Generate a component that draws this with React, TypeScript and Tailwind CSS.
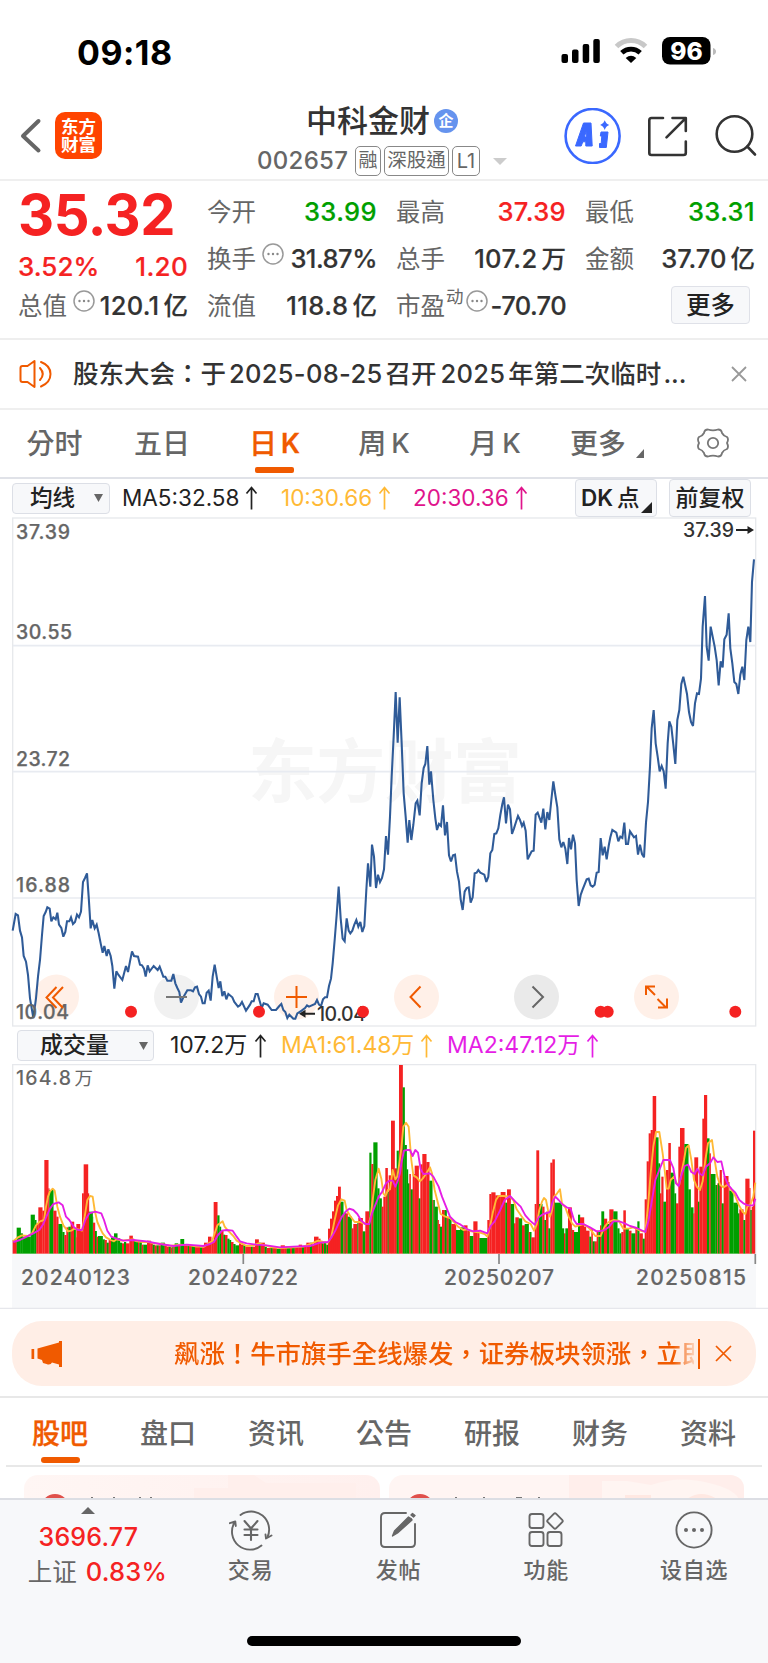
import type { ReactNode } from "react";

const PRICE_A =
  "38,1262 47,1212 54,1216 60,1262 66,1282 71,1338 78,1355 84,1395 90,1465 100,1524 108,1465 114,1400 120,1350 126,1275 131,1218 137,1206 142,1192 149,1196 154,1234 160,1222 167,1228 172,1208 177,1244 184,1254 190,1280 196,1266 201,1234 208,1234 213,1222 219,1242 225,1236 231,1214 237,1222 243,1205 249,1116 255,1104 261,1090 266,1160 272,1255 277,1230 284,1255 290,1244 296,1270 302,1300 308,1328 313,1308 320,1338 325,1318 332,1338 337,1368 343,1436 349,1384 355,1394 367,1410 378,1368 384,1386 390,1354 396,1324 402,1338 414,1340 420,1364 426,1366 432,1376 437,1400 443,1366 449,1384 461,1368 473,1380 479,1370 490,1400 496,1400 502,1412 514,1412 520,1392 526,1420 532,1434 538,1446 543,1478 550,1462 562,1441 573,1441 579,1444 585,1432 591,1430 597,1452 603,1460 608,1480 614,1480 620,1448 626,1442 632,1472 638,1400 644,1364 650,1400 656,1434 661,1414 667,1458 673,1444 679,1468 685,1452 697,1462 703,1476 714,1490 720,1486 726,1476 738,1502 750,1484 755,1474 761,1474 767,1452 773,1452 785,1494 791,1480 803,1484 815,1500 828,1500 838,1488 844,1482 850,1500 856,1506 862,1524 868,1514 880,1526 886,1526 892,1510 905,1502 915,1494 921,1486 927,1490 945,1482 951,1470 957,1484 963,1488 969,1468 975,1462 981,1462 987,1428 993,1406 998,1360 1004,1290 1010,1215 1016,1130 1022,1225 1028,1286 1034,1294 1040,1225 1046,1262 1051,1270 1057,1262 1063,1244 1069,1230 1075,1250 1081,1236 1087,1266 1093,1248 1099,1140 1104,1060 1111,1130 1116,1004 1122,1040 1128,1134 1134,1094 1140,1116 1146,1104 1152,1078 1158,978 1164,1034 1170,920 1175,800 1181,680 1187,546";
const PRICE_B =
  "77,546 83,698 89,562 95,700 101,850 107,920 113,998 118,930 124,990 130,945 137,880 142,872 149,916 155,820 161,774 166,762 172,708 178,824 183,784 190,870 196,925 201,960 207,942 213,948 219,886 225,976 231,936 237,1036 243,1054 249,1036 255,1034 261,1085 267,1115 272,1168 278,1200 284,1145 290,1134 296,1132 302,1178 308,1162 314,1090 320,1088 325,1080 331,1088 343,1094 349,1116 355,1100 361,1030 367,1020 373,972 379,970 385,955 391,915 397,882 402,862 408,940 414,884 420,898 426,972 432,955 438,936 444,918 450,930 456,948 461,938 467,962 473,1048 479,1036 485,1024 491,1022 497,914 503,908 514,938 520,896 526,958 532,906 538,930 544,870 550,814 556,855 562,892 568,988 574,1012 580,996 586,1016 592,1062 597,984 603,1018 609,974 615,1000 620,1110 626,1188 632,1155 638,1138 650,1108 656,1106 662,1126 668,1130 674,1124 680,1088 686,1086 692,984 698,1036 704,1010 710,1048 716,1008 721,982 727,960 739,968 745,994 751,980 757,984 763,938 768,1002 774,1002 780,964 792,982 798,978 804,1034 810,1004 816,1032 822,1042 828,938 834,876 840,770 845,655 851,600 857,700 863,740 869,784 875,768 881,784 887,836 893,700 898,634 904,650 910,704 916,762 922,630 928,600 934,522 940,500 946,528 951,552 957,606 963,636 969,648 975,580 981,550 987,552 993,506 998,350 1005,258 1010,410 1016,452 1022,350 1034,410 1040,450 1046,526 1052,454 1058,472 1063,388 1070,374 1076,310 1081,415 1087,460 1093,516 1099,522 1105,552 1111,494 1117,470 1123,510 1129,390 1135,350 1141,396 1146,216 1152,148";

const VOL_A =
  "38,660R 50,623G 62,640G 68,650G 92,584G 104,600G 109,610R 115,562R 127,572R 133,420R 145,505R 148,510G 160,572R 169,590R 175,612G 187,636G 193,645R 199,622R 205,620G 212,605R 222,628G 227,652R 229,612R 240,628R 246,520R 251,433R 264,520R 267,575G 278,590G 279,608R 285,633G 290,650R 294,648G 308,658G 314,660R 320,668G 326,660R 333,652G 342,640G 352,655G 360,668G 366,670R 372,666G 378,670R 388,647R 398,656R 402,662G 414,664R 418,664G 425,674R 430,674G 441,662R 452,668R 458,674G 464,676R 470,676G 476,676R 482,668G 494,674R 500,680R 506,680G 512,682R 517,680G 520,680R 524,670G 534,676R 541,657G 552,672R 563,676G 567,676R 575,678G 585,680R 600,682G 606,682R 612,668R 624,650R 634,662R 641,546R 652,586G 658,620G 663,630R 670,644G 675,645R 682,656G 688,660G 693,666R 700,672G 706,676G 717,670R 723,674R 730,676G 736,680R 753,680G 758,680R 765,658R 776,668G 782,668R 794,680G 800,684R 812,684G 818,684R 830,686G 842,676R 854,680R 860,680G 870,682R 876,680G 884,680R 896,674R 906,680G 912,680R 919,668R 930,668G 936,676R 942,650R 955,656R 961,668R 966,670G 969,670R 972,668G 978,674R 980,674G 984,626R 990,596R 996,574R 1002,542R 1008,528R 1014,500R 1022,545G 1030,580R 1034,575G 1037,580R 1043,590G 1055,625R 1060,612R 1072,605G 1075,594R 1088,634G 1096,574R 1108,398G 1114,432R 1120,367G 1132,505G 1138,535G 1145,560R 1150,530R 1156,444R 1163,515G 1166,466R 1173,302R 1184,445R 1190,392G 1195,392G";
const VOL_B =
  "87,135R 98,202G 104,375G 110,448G 114,490G 118,462R 122,508G 128,462R 134,437R 146,535G 151,433R 157,402R 169,426R 178,482G 187,540R 190,540G 194,560G 203,600R 206,612R 210,620G 216,570R 224,570G 230,590R 236,592G 244,612R 258,630G 270,622G 281,616R 292,632R 299,648G 310,604R 322,632R 328,654G 352,600R 358,522R 364,517R 376,526R 392,516R 406,548G 411,508R 422,552G 432,610R 436,592R 446,595G 456,616R 464,612G 476,636R 480,636G 484,652R 494,552R 499,391R 507,552G 517,560R 523,600G 528,575R 535,625G 541,428R 547,418R 554,548G 576,625G 582,640R 586,625G 594,562R 605,625G 606,630R 612,636G 624,584G 630,592R 642,620R 648,632R 658,650G 664,626R 668,664G 674,664R 680,632R 685,635G 690,616R 694,574G 702,596R 711,612G 718,568R 730,574G 742,625G 748,640G 754,636R 760,571R 767,625G 776,632R 784,640G 796,622R 802,604G 808,640R 818,656G 824,538R 830,424R 836,340R 842,330R 848,228R 858,352G 865,430G 870,520R 874,470R 880,545G 888,450R 895,369R 902,458G 913,520G 918,550R 925,380R 930,324R 943,372G 955,508G 962,562G 970,580R 973,412R 984,545G 988,440R 997,296R 1002,225R 1011,355G 1018,400R 1022,462G 1036,495G 1042,490R 1044,488G 1049,450R 1055,550G 1061,468R 1075,486R 1078,512G 1090,548G 1104,580G 1108,568R 1120,600G 1126,476R 1138,504R 1141,570G 1145,560R 1149,332R 1155,701R";

const MA1_A =
  "40,664 54,652 66,646 84,648 96,640 108,616 120,604 132,600 138,560 144,530 150,514 158,506 164,512 172,560 180,590 190,616 204,634 214,632 222,626 236,628 246,632 254,590 262,540 270,528 278,530 284,570 292,606 300,624 308,640 318,652 332,660 342,664 350,658 366,662 396,658 410,664 430,666 446,666 462,670 486,672 510,678 540,674 570,676 590,680 612,680 626,670 636,664 644,640 652,616 660,610 668,604 674,620 684,632 700,648 710,662 720,668 740,678 760,676 776,670 796,676 816,682 840,684 880,682 910,680 936,670 954,662 970,666 984,668 994,650 1004,600 1014,556 1024,538 1034,542 1040,570 1052,590 1064,606 1080,606 1094,612 1106,612 1112,590 1118,540 1126,480 1136,446 1144,476 1150,520 1156,528 1164,510 1170,508 1178,450 1186,478 1192,470 1198,430";
const MA1_B =
  "94,385 100,320 108,308 116,320 124,420 130,466 140,472 150,484 158,476 168,462 180,442 186,460 194,510 204,550 212,582 226,590 240,594 252,606 264,620 280,630 292,628 304,634 330,638 344,642 352,650 360,620 368,580 378,540 386,528 400,528 420,530 430,540 440,568 454,588 466,604 482,612 492,632 500,614 508,570 516,545 522,534 528,540 534,570 540,590 546,570 552,530 560,522 570,508 576,550 586,562 596,590 606,610 616,620 640,612 652,620 664,632 676,648 692,648 704,620 716,606 730,600 746,602 760,626 776,626 790,622 806,630 818,634 826,634 834,560 842,460 850,380 858,336 868,336 878,400 884,450 890,506 896,506 902,480 912,470 920,490 928,494 936,450 942,420 948,384 956,376 964,420 972,480 980,500 990,510 998,484 1006,420 1014,370 1026,360 1034,420 1042,470 1050,494 1060,502 1074,494 1084,510 1094,524 1106,554 1118,576 1126,582 1132,560 1142,552 1150,530 1156,488";
const MA2_A =
  "40,666 60,660 80,650 100,640 118,630 130,612 140,588 150,566 160,552 176,547 188,556 198,590 208,600 222,622 234,630 246,630 256,600 268,580 286,575 304,580 312,600 322,632 334,650 350,656 370,662 400,660 440,664 480,672 520,678 560,674 610,678 630,672 642,666 654,645 666,632 680,630 698,632 710,650 720,664 740,670 770,674 800,676 840,682 880,680 930,678 960,668 984,666 996,650 1006,632 1016,610 1026,590 1038,574 1048,566 1060,570 1072,582 1084,602 1096,612 1108,612 1116,580 1124,560 1136,530 1146,516 1158,490 1168,482 1178,482 1186,500 1194,480 1200,460";
const MA2_B =
  "94,430 102,392 112,390 120,390 128,408 136,390 144,398 152,448 160,462 180,460 190,470 206,500 216,530 228,560 240,590 256,606 272,614 292,628 310,634 330,632 352,640 362,618 374,604 390,572 404,540 420,528 436,545 452,560 466,586 480,602 494,614 506,592 520,582 540,576 548,545 556,530 566,540 576,552 590,562 602,566 612,600 620,612 640,612 660,622 680,634 700,632 716,622 730,604 748,604 764,610 780,618 800,624 826,636 836,600 846,540 856,480 868,450 880,420 900,420 910,444 918,490 926,498 936,460 944,438 954,434 964,456 974,462 982,446 990,462 998,466 1008,440 1020,430 1030,412 1042,426 1054,424 1064,470 1074,494 1086,508 1096,518 1108,540 1120,550 1134,556 1150,556 1156,536";

const SEAM = 1110;

function joinSeries(a: string, b: string) {
  const shifted = b
    .split(" ")
    .map((p) => {
      const [x, y] = p.split(",").map(Number);
      return `${x + SEAM},${y}`;
    })
    .join(" ");
  return `${a} ${shifted}`;
}

function parseBars(s: string, dx: number) {
  return s.split(" ").map((p) => {
    const [x, rest] = p.split(",");
    return { x: Number(x) + dx, top: parseInt(rest, 10), up: rest.endsWith("R") };
  });
}

const BARS = [...parseBars(VOL_A, 0), ...parseBars(VOL_B, SEAM)];

function Info() {
  return (
    <svg className="h-[22px] w-[22px] shrink-0" viewBox="0 0 22 22" fill="none" stroke="#999" strokeWidth="1.5">
      <circle cx="11" cy="11" r="10" />
      <g fill="#888" stroke="none">
        <circle cx="6.5" cy="11" r="1.2" />
        <circle cx="11" cy="11" r="1.2" />
        <circle cx="15.5" cy="11" r="1.2" />
      </g>
    </svg>
  );
}

function Up() {
  return (
    <svg className="h-6 w-[13px] shrink-0" viewBox="0 0 13 24" fill="none" stroke="currentColor" strokeWidth="1.7">
      <path d="M6.5 23.5V2M1.5 7.5L6.5 1.5L11.5 7.5" />
    </svg>
  );
}

function Cell({ label, extra, children, color }: { label: string; extra?: ReactNode; children: ReactNode; color: string }) {
  return (
    <div className="-ml-px flex h-[47px] items-center justify-between">
      <div className="flex shrink-0 items-center text-[24.500px] text-[#666]">
        <span>{label}</span>
        {extra}
      </div>
      <span className={`flex items-center whitespace-nowrap text-[25.500px] font-medium [-webkit-text-stroke:0.2px] ${color}`}>{children}</span>
    </div>
  );
}

function Unit({ children }: { children: ReactNode }) {
  return <span className="ml-[4px] text-[24.500px] tracking-normal">{children}</span>;
}

function StatusBar() {
  return (
    <div className="flex h-[102px] items-center justify-between pl-[77px] pr-[52px]">
      <span className="pt-[2px] text-[34px] font-bold tracking-[0.5px] text-black">09:18</span>
      <svg className="h-7 w-[155px]" viewBox="561 37 155 28">
        <rect x="561.5" y="54" width="6.5" height="9" rx="2" />
        <rect x="572" y="49.5" width="6.5" height="13.5" rx="2" />
        <rect x="582.7" y="44" width="6.5" height="19" rx="2" />
        <rect x="593.3" y="39" width="6.5" height="24" rx="2" />
        <path d="M616.5 46.5A20.500 20.500 0 0 1 645.500 46.500" fill="none" stroke="#c8c8c8" strokeWidth="5" />
        <path d="M621.8 52.7A13.500 13.500 0 0 1 640.200 52.700" fill="none" stroke="#000" strokeWidth="4.800" />
        <path d="M625.700 58Q631 53.300 636.300 58L631 63Z" />
        <rect x="662" y="37" width="48.500" height="27.500" rx="8" />
        <path d="M713 48Q716 49 716 51.500Q716 54 713 55Z" fill="#bbb" />
        <text x="686.500" y="59.600" textAnchor="middle" fill="#fff" fontSize="24.500" fontWeight="800">
          96
        </text>
      </svg>
    </div>
  );
}

function Header() {
  return (
    <div className="flex h-[79px] items-start border-b-2 border-[#efefef] pl-[20px]">
      <svg className="mt-[16px] h-[36px] w-[22px]" viewBox="0 0 22 36" fill="none" stroke="#666" strokeWidth="4" strokeLinecap="round" strokeLinejoin="round">
        <path d="M18.500 3L3 18L18.500 32.500" />
      </svg>
      <div className="ml-[13px] mt-[10px] flex h-[47px] w-[47px] flex-col items-center justify-center rounded-[10px] bg-[#ff4400] text-[17.5px] font-bold leading-[18px] text-white">
        <span>东方</span>
        <span>财富</span>
      </div>
      <div className="ml-[155px] flex w-[251px] flex-col">
        <div className="ml-[49px] flex h-[37px] items-center whitespace-nowrap">
          <span className="text-[31px] font-medium leading-[37px] text-[#333]">中科金财</span>
          <span className="ml-[4px] flex h-[24px] w-[24px] items-center justify-center rounded-full bg-[#6593ee] text-[15px] font-bold leading-none text-white">
            企
          </span>
        </div>
        <div className="mt-[7px] flex h-[30px] items-center text-[#666]">
          <span className="w-[98px] text-[24px] font-medium tracking-[0.3px]">002657</span>
          <span className="flex h-[30px] w-[26px] items-center justify-center rounded-[5px] border border-[#888] text-[19px]">融</span>
          <span className="ml-[3px] flex h-[30px] w-[65px] items-center justify-center rounded-[5px] border border-[#888] text-[19.500px]">深股通</span>
          <span className="ml-[3px] flex h-[30px] w-[28px] items-center justify-center rounded-[5px] border border-[#888] text-[20px]">L1</span>
          <svg className="ml-[13px] h-[7px] w-[14px]" viewBox="0 0 14 7">
            <path d="M0 0H14L7 7Z" fill="#ccc" />
          </svg>
        </div>
      </div>
      <svg className="ml-[55px] mt-[6px] h-[56px] w-[196px]" viewBox="563 108 196 56" fill="none">
        <circle cx="592.600" cy="136" r="27" stroke="#3a68ff" strokeWidth="2.600" />
        <g fill="#3a68ff" stroke="#3a68ff" strokeWidth="1" strokeLinejoin="round">
          <path
            fillRule="evenodd"
            d="M575.500 146L583.500 123H591L592.200 146H585.800V141.800H582.800L581.200 146ZM584.300 137H586.300L586.100 131.500Z"
          />
          <path d="M601 132H608L606.300 147.500H599.500V143.500H601.200L601.800 136H600.300Z" />
        </g>
        <path d="M604.700 120Q605.900 124 609.300 125Q605.900 126 604.700 130Q603.500 126 600.200 125Q603.500 124 604.700 120.500Z" fill="#3a68ff" />
        <g stroke="#333" strokeWidth="2.600" strokeLinecap="round" strokeLinejoin="round">
          <path d="M663 118H651.500Q649.300 118 649.300 120.200V153Q649.300 155 651.500 155H683.500Q685.800 155 685.800 153V141.500" />
          <path d="M672.500 118H685.800V131M685.500 118.300L666.500 137.300" />
          <circle cx="734.500" cy="134" r="17.800" />
          <path d="M747.300 146.500L755 154.500" />
        </g>
      </svg>
    </div>
  );
}

function Quote() {
  return (
    <div className="grid h-[159px] grid-cols-[169px_169px_169px_169px] gap-x-5 border-b-2 border-[#eee] pl-[19px] pt-[8px]">
      <div className="flex flex-col">
        <div className="-ml-px flex h-[51px] items-center text-[56px] font-bold tracking-[-0.5px] text-[#f52222]">35.32</div>
        <div className="-ml-px flex h-[43px] items-center justify-between pt-[9px] text-[26px] font-medium text-[#f52222] [-webkit-text-stroke:0.2px_#f52222]">
          <span>3.52%</span>
          <span className="tracking-[0.3px]">1.20</span>
        </div>
        <Cell label="总值" color="text-[#333] tracking-[0.3px]" extra={<span className="-mt-[11px] ml-[6px] w-[20px]"><Info /></span>}>
          120.1<Unit>亿</Unit>
        </Cell>
      </div>
      <div>
        <Cell label="今开" color="text-[#009f00] tracking-[0.4px]">33.99</Cell>
        <Cell label="换手" color="text-[#333] tracking-[-0.500px]" extra={<span className="-mt-[11px] ml-[6px]"><Info /></span>}>
          31.87%
        </Cell>
        <Cell label="流值" color="text-[#333] tracking-[0.5px]">
          118.8<Unit>亿</Unit>
        </Cell>
      </div>
      <div>
        <Cell label="最高" color="text-[#f52222] tracking-[0.4px]">37.39</Cell>
        <Cell label="总手" color="text-[#333] tracking-[0.4px]">
          107.2<Unit>万</Unit>
        </Cell>
        <Cell
          label="市盈"
          color="text-[#333] tracking-[-0.6px]"
          extra={
            <>
              <span className="-mt-[18px] ml-[1px] text-[17.5px]">动</span>
              <span className="-mt-[11px] ml-[2px]"><Info /></span>
            </>
          }
        >
          -70.70
        </Cell>
      </div>
      <div>
        <Cell label="最低" color="text-[#009f00] tracking-[0.4px]">33.31</Cell>
        <Cell label="金额" color="text-[#333]">
          37.70<Unit>亿</Unit>
        </Cell>
        <div className="ml-[85px] mt-[3px] flex h-[38px] w-[79px] items-center justify-center rounded-[4px] border border-[#dfe1e8] bg-[#f7f8fa] text-[24.500px] font-medium text-[#222]">
          更多
        </div>
      </div>
    </div>
  );
}

function News() {
  return (
    <div className="flex h-[70px] items-center border-b-2 border-[#efefef] pl-[19px] text-[#333]">
      <svg className="h-[30px] w-[34px]" viewBox="0 0 34 30" fill="none" stroke="#f05a00" strokeWidth="2" strokeLinejoin="round" strokeLinecap="round">
        <path d="M15.500 2L8.500 7H3.500Q1.500 7 1.500 9V21Q1.500 23 3.500 23H8.500L15.500 28Z" />
        <path d="M21 9Q26.500 15 21 21M22 3Q31.500 6.500 31.500 15Q31.500 23.500 22 27.500" />
      </svg>
      <div className="ml-[20px] flex w-[620px] items-center whitespace-nowrap text-[25.500px] font-medium">
        <span>股东大会：于</span>
        <span className="ml-[3px] tracking-[0.3px]">2025-08-25</span>
        <span className="ml-[3px]">召开</span>
        <span className="ml-[4px] tracking-[0.3px]">2025</span>
        <span className="ml-[3px]">年第二次临时</span>
        <span className="ml-[2px]">...</span>
      </div>
      <svg className="ml-[38px] h-[16px] w-[16px]" viewBox="0 0 16 16" stroke="#999" strokeWidth="1.800">
        <path d="M1 1L15 15M15 1L1 15" />
      </svg>
    </div>
  );
}

const PERIODS = [
  { cjk: "分时", w: "w-[109px]" },
  { cjk: "五日", w: "w-[106px]" },
  { cjk: "日", k: true, w: "w-[119px]", on: true },
  { cjk: "周", k: true, w: "w-[100px]" },
  { cjk: "月", k: true, w: "w-[122px]" },
];

function Periods() {
  return (
    <div className="flex h-[69px] border-b-2 border-[#e0e2e8] text-[28px] font-medium text-[#666]">
      {PERIODS.map((p) => (
        <div key={p.cjk} className={`flex flex-col items-center ${p.w} ${p.on ? "text-[#f05a00] [-webkit-text-stroke:0.3px_#f05a00]" : ""}`}>
          <div className="flex h-[57px] items-center pt-[11px]">
            {p.cjk}
            {p.k && <span className={p.on ? "ml-[4px] text-[27px] font-semibold" : "ml-[5px] text-[27px]"}>K</span>}
          </div>
          {p.on && <div className="h-[6px] w-[39px] rounded-[2px] bg-[#f05a00]" />}
        </div>
      ))}
      <div className="ml-[14px] flex h-[57px] items-center pt-[11px]">更多</div>
      <svg className="ml-[10px] mt-[39px] h-[9px] w-[8px]" viewBox="0 0 8 9">
        <path d="M8 0V9H0Z" fill="#666" />
      </svg>
      <svg className="ml-[52px] mt-[17px] h-[32px] w-[34px]" viewBox="0 0 34 32" fill="none" stroke="#777" strokeWidth="1.800" strokeLinejoin="round">
        <path d="M12 2.500Q17 4.200 22 2.500Q25.500 2.500 26 6Q27.500 9 31 10Q33 12 31 16Q33 20 31 22Q27.500 23 26 26Q25.500 29.500 22 29.500Q17 27.800 12 29.500Q8.500 29.500 8 26Q6.500 23 3 22Q1 20 3 16Q1 12 3 10Q6.500 9 8 6Q8.500 2.500 12 2.500Z" />
        <circle cx="17" cy="16" r="5.200" />
      </svg>
    </div>
  );
}

function AverageRow() {
  return (
    <div className="flex h-[38px] items-center pl-[12px] text-[22.500px]">
      <div className="flex h-[31px] w-[98px] items-center justify-between rounded-[4px] border border-[#dcdfe6] bg-[#f7f8fa] pl-[17px] pr-[6px] font-medium text-[#222]">
        均线
        <svg className="h-[8px] w-[9px]" viewBox="0 0 9 8">
          <path d="M0 0H9L4.500 8Z" fill="#666" />
        </svg>
      </div>
      <div className="ml-[12px] flex w-[159px] items-center gap-[6px] text-[#222]"><span>MA5:32.58</span><Up /></div>
      <div className="flex w-[132px] items-center gap-[6px] text-[#ffb935]"><span>10:30.66</span><Up /></div>
      <div className="flex w-[162px] items-center gap-[6px] text-[#e0148c]"><span>20:30.36</span><Up /></div>
      <div className="relative flex h-[38px] w-[82px] items-center rounded-[4px] border border-[#dcdfe6] bg-[#f7f8fa] pl-[5px] font-semibold text-[#222]">
        DK<span className="ml-[4px] font-medium">点</span>
        <svg className="absolute bottom-[3px] right-[4px] h-[11px] w-[11px]" viewBox="0 0 11 11">
          <path d="M11 0V11H0Z" fill="#222" />
        </svg>
      </div>
      <div className="ml-[12px] flex h-[38px] w-[82px] items-center justify-center rounded-[4px] border border-[#dcdfe6] bg-[#f7f8fa] text-[23px] font-medium text-[#222]">
        前复权
      </div>
    </div>
  );
}

const GRID = [
  { y: 645.7, label: "30.55", base: 638.7, w: 55 },
  { y: 771.7, label: "23.72", base: 765.5, w: 53 },
  { y: 898, label: "16.88", base: 892, w: 53 },
];

const DOTS = [131, 259, 363, 600.7, 607.7, 735.3];

function PriceChart() {
  return (
    <svg className="block h-[510px] w-[768px]" viewBox="0 517 768 510" fill="none">
      <text x="248" y="797" fontSize="69" fontWeight="700" fill="#f6f6f6" textLength="274">
        东方财富
      </text>
      <rect x="12.700" y="518" width="743" height="508" stroke="#e6e8ec" strokeWidth="1.300" />
      {GRID.map((g) => (
        <path key={g.y} d={`M13 ${g.y}H755.500`} stroke="#e8ebf1" strokeWidth="1.700" />
      ))}
      {[56.5, 296.5, 416.5, 656.5].map((x) => (
        <circle key={x} cx={x} cy="997" r="22.500" fill="#fff0e8" />
      ))}
      <circle cx="176.500" cy="997" r="22.500" fill="#f1f1f1" />
      <circle cx="536.500" cy="997" r="22.500" fill="#eaeaea" />
      <g transform="translate(0 510) scale(.33333)">
        <polyline points={joinSeries(PRICE_A, PRICE_B)} stroke="#2f5b98" strokeWidth="6.200" strokeLinejoin="miter" strokeMiterlimit="3" />
      </g>
      <g fill="#666" fontSize="19.500" fontWeight="500" stroke="#666" strokeWidth="0.250">
        <text x="16" y="539.300" textLength="54">37.39</text>
        {GRID.map((g) => (
          <text key={g.label} x="16" y={g.base} textLength={g.w + 1}>{g.label}</text>
        ))}
        <text x="16" y="1018.500" textLength="53">10.04</text>
      </g>
      <g fill="#333" fontSize="19.500" fontWeight="500">
        <text x="683" y="537" textLength="51">37.39</text>
        <text x="317" y="1021.300" textLength="49">10.04</text>
      </g>
      <path d="M736 530H750M315 1013.700H304" stroke="#222" strokeWidth="2" />
      <path d="M754 530L747.500 526V534ZM299 1013.700L305.500 1009.700V1017.700Z" fill="#222" />
      <g stroke="#f05a00" strokeWidth="2">
        <path d="M56.500 987L46.500 997.500L56.500 1008M63 987L53 997.500L63 1008" />
        <path d="M286 997H307M296.500 986V1008" />
        <path d="M420.500 986.500L410.500 997L420.500 1007.500" />
        <path d="M647 987L655 995M646 995V986.500H655M657.500 999L666 1007.500M667 998.500V1007.500H658" />
      </g>
      <path d="M166 997H187" stroke="#777" strokeWidth="2" />
      <path d="M532.500 986.500L543 997L532.500 1007.500" stroke="#666" strokeWidth="2" />
      {DOTS.map((x) => (
        <circle key={x} cx={x} cy="1011.700" r="6" fill="#f52222" />
      ))}
    </svg>
  );
}

function VolumeRow() {
  return (
    <div className="flex h-[37px] items-center pl-[17px] text-[23px]">
      <div className="flex h-[31px] w-[137px] items-center justify-between rounded-[4px] border border-[#dcdfe6] bg-[#f7f8fa] pl-[22px] pr-[5px] font-medium text-[#222]">
        成交量
        <svg className="h-[8px] w-[9px]" viewBox="0 0 9 8">
          <path d="M0 0H9L4.500 8Z" fill="#666" />
        </svg>
      </div>
      <div className="ml-[16px] flex w-[111px] items-center gap-[7px] text-[#222]"><span>107.2万</span><Up /></div>
      <div className="flex w-[166px] items-center gap-[6px] text-[#ffb935]"><span className="tracking-[-0.1px]">MA1:61.48万</span><Up /></div>
      <div className="flex items-center gap-[6px] text-[#e51ee5]"><span>MA2:47.12万</span><Up /></div>
    </div>
  );
}

function VolumeChart() {
  return (
    <svg className="block h-[245px] w-[768px]" viewBox="0 1064 768 245" fill="none">
      <rect x="12" y="1254" width="744" height="55" fill="#f7f8fa" />
      <path d="M12.700 1254V1064.500H755.700V1254" stroke="#e6e8ec" strokeWidth="1.300" />
      <text x="16" y="1084.500" fontSize="19.500" fontWeight="500" fill="#666" textLength="55">164.8</text>
      <text x="74.500" y="1085" fontSize="18.500" fill="#666">万</text>
      <g transform="translate(0 1020) scale(.33333)">
        {BARS.slice(0, -1).map((b, i) => (
          <rect key={i} x={b.x} y={b.top} width={BARS[i + 1].x - b.x + 0.6} height={701 - b.top} fill={b.up ? "#f52222" : "#009f00"} />
        ))}
        <polyline points={joinSeries(MA1_A, MA1_B)} stroke="#ffb935" strokeWidth="5.600" strokeLinejoin="round" />
        <polyline points={joinSeries(MA2_A, MA2_B)} stroke="#e51ee5" strokeWidth="5.600" strokeLinejoin="round" />
      </g>
      <path d="M243.300 1254V1264M499 1254V1264M755.300 1254V1264" stroke="#888" strokeWidth="1.700" />
      <g fill="#666" fontSize="21" fontWeight="500" stroke="#666" strokeWidth="0.200">
        <text x="21" y="1285" textLength="109">20240123</text>
        <text x="188" y="1285" textLength="110">20240722</text>
        <text x="444" y="1285" textLength="110">20250207</text>
        <text x="636" y="1285" textLength="110">20250815</text>
      </g>
      <path d="M0 1308.400H768" stroke="#e6e7ec" strokeWidth="1.500" />
    </svg>
  );
}

function Banner() {
  return (
    <div className="h-[89px] border-b-2 border-[#e8e8e8] px-[12px] pt-[12px]">
      <div className="flex h-[65px] items-center rounded-[30px] bg-[#ffeee6] pl-[19px] text-[#f05a00]">
        <svg className="h-[28px] w-[32px]" viewBox="0 0 32 28" fill="#f05a00">
          <path d="M0.500 9H3.200V19H0.500ZM6.500 8.500L28 2.500V1H31V27H28V24.500L21 22.500Q19.500 25.500 15.500 24L12 23L11 20L6.500 18.500Z" />
        </svg>
        <div className="ml-[111px] h-[36px] w-[520px] overflow-hidden whitespace-nowrap text-[25.400px] font-medium leading-[36px] [mask-image:linear-gradient(to_right,black_96%,transparent_101%)]">
          飙涨！牛市旗手全线爆发，证券板块领涨，立即
        </div>
        <div className="ml-[4px] h-[30px] w-[1.500px] bg-[#f05a00]" />
        <svg className="ml-[15px] h-[17px] w-[17px]" viewBox="0 0 17 17" stroke="#f05a00" strokeWidth="1.700">
          <path d="M1 1L16 16M16 1L1 16" />
        </svg>
      </div>
    </div>
  );
}

const SECTIONS = ["股吧", "盘口", "资讯", "公告", "研报", "财务", "资料"];

function Sections() {
  return (
    <div className="mx-[6px] flex h-[69px] border-b-2 border-[#e8e8e8] text-[28px] font-medium text-[#666]">
      {SECTIONS.map((s, i) => (
        <div key={s} className={`flex w-[108.100px] flex-col items-center ${i === 0 ? "text-[#f05a00] [-webkit-text-stroke:0.3px_#f05a00]" : ""}`}>
          <div className="flex h-[59px] items-center pt-[12px]">{s}</div>
          {i === 0 && <div className="h-[6px] w-[39px] rounded-[3px] bg-[#f05a00]" />}
        </div>
      ))}
    </div>
  );
}

function Cards() {
  return (
    <div className="flex h-[31px] gap-[9px] overflow-hidden pl-[24px] pt-[8px]">
      <div className="h-[80px] w-[356px] shrink-0 rounded-[14px] bg-gradient-to-r from-[#fff6f4] to-[#fff0ee]">
        <svg className="h-[24px] w-full" viewBox="0 0 356 24">
          <path d="M170 13H204V0H230L242 8H332V24H170Z" fill="#ffefec" />
          <circle cx="31" cy="33" r="14" fill="#e0504b" />
          <path d="M68 22V24M90 22V24M116 22V24M127 22V24" stroke="#777" strokeWidth="2" />
        </svg>
      </div>
      <div className="h-[80px] w-[355px] shrink-0 rounded-[14px] bg-[#fff5f3]">
        <svg className="h-[24px] w-full" viewBox="0 0 355 24">
          <path d="M180 0H342Q355 2 355 14V24H180Z" fill="#ffeeeb" />
          <path d="M213 24V6H238L262 10Q290 0 320 8Q345 14 350 24Z" fill="#fff5f2" />
          <path d="M236 24V20H262V24M298 24Q312 14 328 24" fill="#ffe8e2" />
          <circle cx="31" cy="33" r="14" fill="#e0504b" />
          <path d="M67 22V24M95 22V24M127 23H133M150 22V24" stroke="#777" strokeWidth="2" />
        </svg>
      </div>
    </div>
  );
}

function NavItem({ label, children }: { label: string; children: ReactNode }) {
  return (
    <div className="flex w-[148px] flex-col items-center">
      <svg className="mt-[9px] h-[42px] w-[44px]" viewBox="0 0 44 42" fill="none" stroke="#666" strokeWidth="1.900" strokeLinejoin="round" strokeLinecap="round">
        {children}
      </svg>
      <span className="mt-[2px] text-[22px] font-medium leading-[34px] tracking-[0.8px] text-[#666]">{label}</span>
    </div>
  );
}

function BottomBar() {
  return (
    <div className="flex h-[165px] flex-col border-t-2 border-[#dcdee4] bg-[#f7f8fa]">
      <div className="flex h-[136px]">
        <div className="relative flex w-[177px] flex-col items-center">
          <svg className="mt-[7px] h-[7px] w-[14px]" viewBox="0 0 14 7">
            <path d="M7 0L14 7H0Z" fill="#666" />
          </svg>
          <span className="mt-[6px] text-[25px] font-medium leading-[34px] tracking-[0.2px] text-[#f52222]">3696.77</span>
          <div className="flex items-center pl-[18px] text-[24.500px] leading-[36px] text-[#666]">
            <span>上证</span>
            <span className="ml-[9px] text-[25.500px] font-medium tracking-[0.200px] text-[#f52222]">0.83%</span>
          </div>
        </div>
        <NavItem label="交易">
          <path d="M11.500 6A18 18 0 0 1 38.500 28" />
          <path d="M32.500 36.500A18 18 0 0 1 5.500 13.500M0.800 14.200L6.300 12.500L6.800 17M42.500 26.500L37 29.500L36.500 25.500" />
          <path d="M15.500 12L22 19.500L28.500 12M15.500 20.500H28.500M15.500 26H28.500M22 20V31" strokeWidth="2.100" />
        </NavItem>
        <NavItem label="发帖">
          <path d="M30 4H9Q5 4 5 8V34Q5 38 9 38H35Q39 38 39 34V15" />
          <path d="M35 9.500L32.500 8L18.500 22L16.500 27L21.500 24L36 11ZM36.500 4.500L39 6.500L37.500 8L35 6Z" fill="#666" strokeWidth="1.400" />
        </NavItem>
        <NavItem label="功能">
          <rect x="5.500" y="5" width="14" height="14" rx="2.500" />
          <rect x="5.500" y="23" width="14" height="14" rx="2.500" />
          <rect x="23.500" y="23" width="14" height="14" rx="2.500" />
          <path d="M29.800 4.800Q31 3.600 32.200 4.800L38.200 10.800Q39.400 12 38.200 13.200L32.200 19.200Q31 20.400 29.800 19.200L23.800 13.200Q22.600 12 23.800 10.800Z" />
        </NavItem>
        <NavItem label="设自选">
          <circle cx="22" cy="21" r="17.600" />
          <g fill="#666" stroke="none">
            <circle cx="14" cy="21" r="2" />
            <circle cx="22" cy="21" r="2" />
            <circle cx="30" cy="21" r="2" />
          </g>
        </NavItem>
      </div>
      <div className="mx-auto h-[10px] w-[274px] rounded-full bg-black" />
    </div>
  );
}

export default function App() {
  return (
    <div className="h-[1663px] w-[768px] overflow-hidden bg-white font-['Inter','Noto_Sans_CJK_TC',sans-serif]">
      <StatusBar />
      <Header />
      <Quote />
      <News />
      <Periods />
      <AverageRow />
      <PriceChart />
      <VolumeRow />
      <VolumeChart />
      <Banner />
      <Sections />
      <Cards />
      <BottomBar />
    </div>
  );
}
